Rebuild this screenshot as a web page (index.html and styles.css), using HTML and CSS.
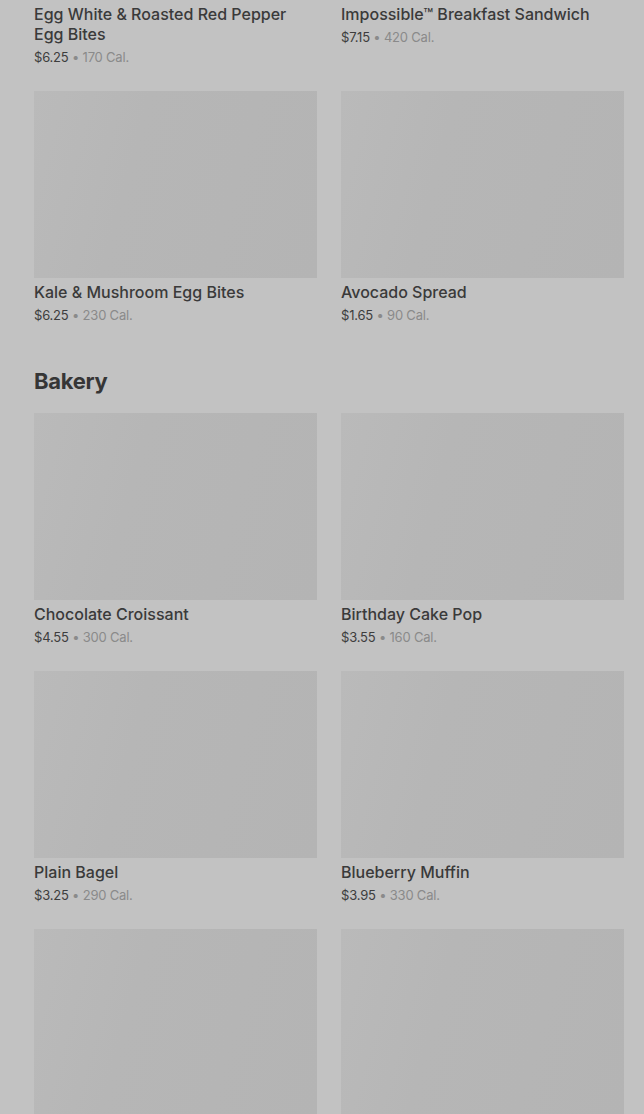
FILE: index.html
```html
<!DOCTYPE html>
<html lang="en">
<head>
  <meta charset="UTF-8" />
  <meta name="viewport" content="width=device-width, initial-scale=1.0" />
  <title>Menu</title>
  <link rel="stylesheet" href="styles.css">
</head>
<body>
  <main class="menu">
    <section class="category scrolled">
      <div class="items">
        <div class="item">
          <div class="thumb"></div>
          <h3>Egg White &amp; Roasted Red Pepper Egg Bites</h3>
          <p class="meta"><span class="price">$6.25</span> • 170 Cal.</p>
        </div>
        <div class="item">
          <div class="thumb"></div>
          <h3>Impossible™ Breakfast Sandwich</h3>
          <p class="meta"><span class="price">$7.15</span> • 420 Cal.</p>
        </div>
        <div class="item">
          <div class="thumb"></div>
          <h3>Kale &amp; Mushroom Egg Bites</h3>
          <p class="meta"><span class="price">$6.25</span> • 230 Cal.</p>
        </div>
        <div class="item">
          <div class="thumb"></div>
          <h3>Avocado Spread</h3>
          <p class="meta"><span class="price">$1.65</span> • 90 Cal.</p>
        </div>
      </div>
    </section>

    <section class="category">
      <h2>Bakery</h2>
      <div class="items">
        <div class="item">
          <div class="thumb"></div>
          <h3>Chocolate Croissant</h3>
          <p class="meta"><span class="price">$4.55</span> • 300 Cal.</p>
        </div>
        <div class="item">
          <div class="thumb"></div>
          <h3>Birthday Cake Pop</h3>
          <p class="meta"><span class="price">$3.55</span> • 160 Cal.</p>
        </div>
        <div class="item">
          <div class="thumb"></div>
          <h3>Plain Bagel</h3>
          <p class="meta"><span class="price">$3.25</span> • 290 Cal.</p>
        </div>
        <div class="item">
          <div class="thumb"></div>
          <h3>Blueberry Muffin</h3>
          <p class="meta"><span class="price">$3.95</span> • 330 Cal.</p>
        </div>
        <div class="item">
          <div class="thumb"></div>
        </div>
        <div class="item">
          <div class="thumb"></div>
        </div>
      </div>
    </section>
  </main>
</body>
</html>
```

FILE: styles.css
```css
* { box-sizing: border-box; }
body {
  margin: 0;
  background-color: #c2c2c2;
  color: #3a3a3a;
  font-family: 'Inter', 'Liberation Sans', sans-serif;
  overflow: hidden;
}
.menu {
  padding: 0 20px 0 34px;
}
.category.scrolled {
  margin-top: -187px;
}
.category h2 {
  margin: 42px 0 18px;
  font-size: 22px;
  line-height: 28px;
  font-weight: 700;
  letter-spacing: -0.3px;
  color: #363636;
}
.items {
  display: grid;
  grid-template-columns: 1fr 1fr;
  column-gap: 24px;
  row-gap: 24px;
}
.thumb {
  height: 187px;
  background: linear-gradient(105deg, #bababa 0%, #b6b6b6 35%, #b4b4b4 100%);
}
.item h3 {
  margin: 4px 0 0;
  font-size: 16px;
  line-height: 20px;
  font-weight: 500;
  color: #3a3a3a;
}
.meta {
  margin: 3px 0 0;
  font-size: 13px;
  line-height: 20px;
  letter-spacing: -0.2px;
  color: #8a8a8a;
}
.price {
  color: #3d3d3d;
}
```
